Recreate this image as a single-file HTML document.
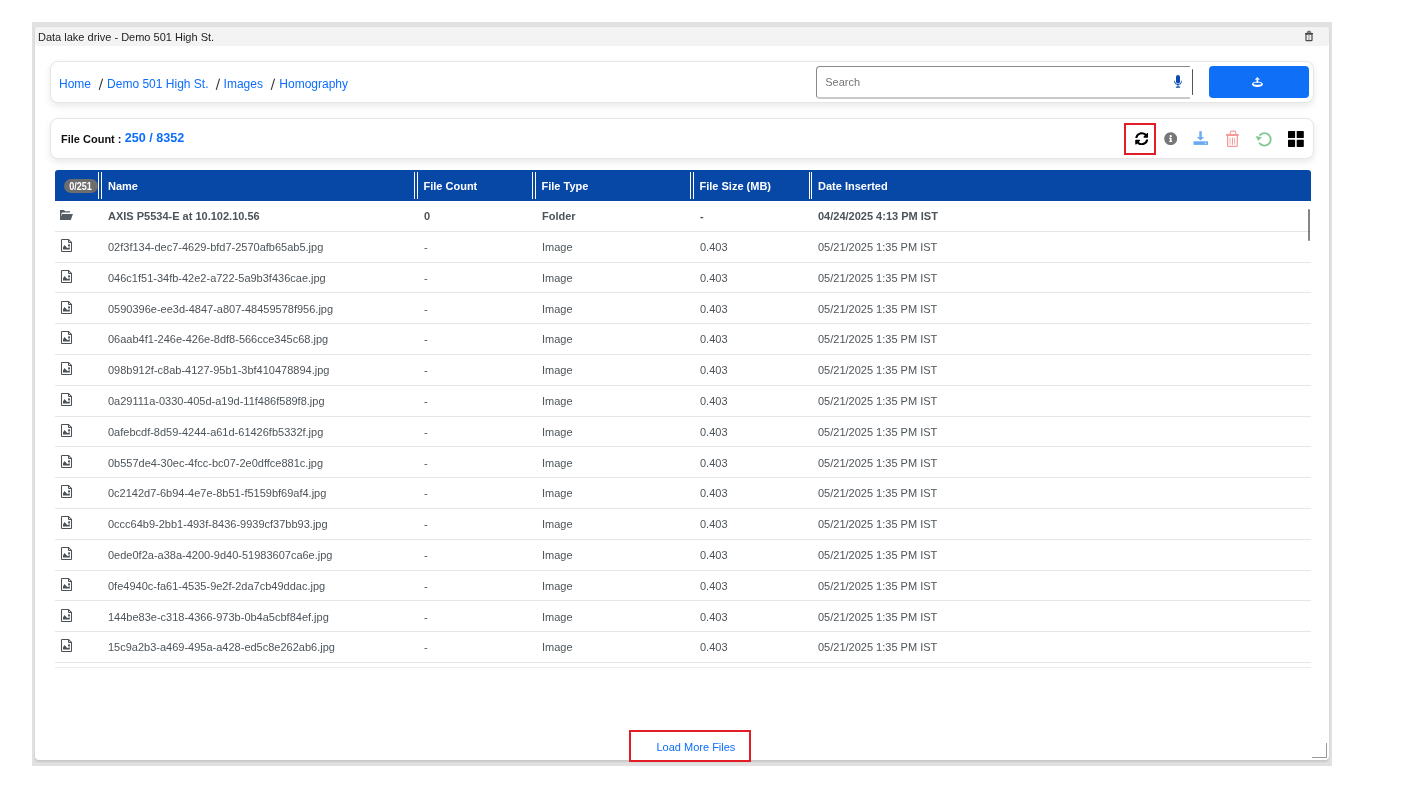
<!DOCTYPE html>
<html><head><meta charset="utf-8">
<style>
*{box-sizing:border-box;margin:0;padding:0}
html,body{width:1402px;height:808px;overflow:hidden;background:#fff;font-family:"Liberation Sans",sans-serif;}
.abs{position:absolute}
.frame{position:absolute;left:32px;top:22px;width:1300px;height:744px;background:#e1e1e1}
.panel{position:absolute;left:35px;top:27px;width:1294px;height:733px;background:#fff;border-radius:4px;box-shadow:0 0 1px rgba(0,0,0,.1),0 2px 2px rgba(0,0,0,.11)}
.titlebar{position:absolute;left:35px;top:27px;width:1294px;height:19px;background:#f3f3f3;border-radius:4px}
.t{position:absolute;white-space:nowrap;line-height:1}
.card{position:absolute;background:#fff;border:1px solid #e6e6e6;border-radius:8px;box-shadow:0 3px 7px rgba(0,0,0,.09)}
.bc{font-size:12px;color:#0d6efd}
.sep{color:#222}
.th{position:absolute;left:55px;top:170px;width:1256px;height:31px;background:#0747a6;border-radius:3px 3px 0 0}
.dl{position:absolute;top:2px;width:4px;height:27px;border-left:1px solid #fff;border-right:1px solid #fff}
.htx{position:absolute;top:10.7px;font-size:11px;font-weight:bold;color:#fff;line-height:1;white-space:nowrap}
.rows{position:absolute;left:55px;top:201px;width:1256px}
.row{position:relative;height:30.8px;border-bottom:1px solid #e6e6e6;font-size:11px;color:#4d5459;line-height:29.8px;white-space:nowrap}
.row span{position:absolute;top:1.2px}
.row .c1{left:53px}.row .c2{left:369px}.row .c3{left:487px}.row .c4{left:645px}.row .c5{left:763px}
.row .ic{position:absolute;left:5px;top:7px}
.b{font-weight:bold}
</style></head>
<body>
<div id="wrap" style="position:absolute;left:0;top:0;width:1402px;height:808px;will-change:transform">
<svg width="0" height="0" style="position:absolute"><defs><symbol id="fold" viewBox="0 0 13 11"><path d="M0 0H4L5.2 1.3H10V2.6H3Q1.5 2.6 1.3 4L1.3 8.5L0 10Z" fill="#555c62"/><path d="M2.3 3.9H12.9L10.8 10H0L1.8 4.6Q2 3.9 2.3 3.9Z" fill="#555c62"/></symbol><symbol id="fimg" viewBox="0 0 13 15"><path d="M1.5 2.1Q1.5 1.5 2.1 1.5H8.5L11.5 4.5V12.9Q11.5 13.5 10.9 13.5H2.1Q1.5 13.5 1.5 12.9Z" fill="none" stroke="#4a5055" stroke-width="1.05"/><path d="M8.5 1.6V4.5H11.4" fill="none" stroke="#4a5055" stroke-width="1"/><rect x="8.1" y="6.3" width="1.9" height="2.1" rx=".5" fill="#4a5055"/><path d="M3 11.6V9.4L4.5 6.9L7.2 10.1L9.8 9.3V11.6Z" fill="#4a5055"/></symbol></defs></svg>
<div class="frame"></div>
<div class="panel"></div>
<div class="titlebar"></div>
<div class="t" style="left:38px;top:32.4px;font-size:11px;color:#222">Data lake drive - Demo 501 High St.</div>
<!-- title trash icon -->
<svg class="abs" style="left:1304px;top:30px" width="10" height="12" viewBox="0 0 10 12">
<path d="M3.3 3.2V2.3a1.2 1.2 0 0 1 1.2-1.1h1a1.2 1.2 0 0 1 1.2 1.1v.9" fill="#888" stroke="#555" stroke-width=".9"/>
<rect x="1" y="3" width="8" height="1.2" fill="#4a4a4a"/>
<path d="M2 4.2h6v5.8a.7.7 0 0 1-.7.7H2.7a.7.7 0 0 1-.7-.7z" fill="none" stroke="#4a4a4a" stroke-width="1.2"/>
<rect x="4.5" y="4.6" width="1" height="5.4" fill="#8a8a8a"/>
</svg>

<!-- breadcrumb card -->
<div class="card" style="left:50px;top:61px;width:1264px;height:42px"></div>
<div class="t bc" style="left:59.0px;top:77.6px">Home</div>
<svg class="abs" style="left:98.4px;top:78px" width="6" height="13" viewBox="0 0 6 13"><path d="M4.6 0.6L1.2 11.8" stroke="#333" stroke-width="1.1"/></svg>
<div class="t bc" style="left:107.1px;top:77.6px">Demo 501 High St.</div>
<svg class="abs" style="left:214.8px;top:78px" width="6" height="13" viewBox="0 0 6 13"><path d="M4.6 0.6L1.2 11.8" stroke="#333" stroke-width="1.1"/></svg>
<div class="t bc" style="left:223.6px;top:77.6px">Images</div>
<svg class="abs" style="left:270.4px;top:78px" width="6" height="13" viewBox="0 0 6 13"><path d="M4.6 0.6L1.2 11.8" stroke="#333" stroke-width="1.1"/></svg>
<div class="t bc" style="left:279.3px;top:77.6px">Homography</div>

<!-- search -->
<div class="abs" style="left:816px;top:66px;width:374px;height:33px;border-top:1px solid #8a8a8a;border-left:1px solid #8a8a8a;border-bottom:2px solid #c9c9c9;border-radius:4px 0 0 4px"></div>
<div class="t" style="left:825.2px;top:76.7px;font-size:11px;color:#757575">Search</div>
<svg class="abs" style="left:1173px;top:74px" width="10" height="15" viewBox="0 0 10 15">
<rect x="3" y="1" width="4" height="8.5" rx="2" fill="#0b49b0"/>
<path d="M1.6 6.8v.9a3.4 2.8 0 0 0 6.8 0v-.9" fill="none" stroke="#0b49b0" stroke-width="1"/>
<rect x="4.5" y="10.8" width="1" height="2" fill="#0b49b0"/><rect x="2.9" y="12.6" width="4.3" height="1.2" rx=".5" fill="#0b49b0"/>
</svg>
<div class="abs" style="left:1192px;top:68.7px;width:1.3px;height:26.7px;background:#555;border-radius:1px"></div>
<div class="abs" style="left:1209px;top:66px;width:100px;height:32px;background:#0f6ff7;border-radius:4px"></div>
<svg class="abs" style="left:1251px;top:76px" width="13" height="12" viewBox="0 0 13 12">
<path d="M3.8 3.7L6.3 1L8.9 3.7Z" fill="#fff"/><rect x="5.55" y="3.4" width="1.55" height="3.4" fill="#fff"/>
<path fill="#fff" fill-rule="evenodd" d="M0.9 8.3a5.5 2.8 0 1 0 11 0a5.5 2.8 0 1 0 -11 0zM2.6 7.7a3.8 1.1 0 1 0 7.6 0a3.8 1.1 0 1 0 -7.6 0z"/>
</svg>

<!-- file count card -->
<div class="card" style="left:50px;top:118px;width:1264px;height:41px"></div>
<div class="t b" style="left:61px;top:133.8px;font-size:11px;color:#111">File Count :</div>
<div class="t b" style="left:124.8px;top:132.3px;font-size:12.6px;color:#0d6efd">250 / 8352</div>

<!-- toolbar icons -->
<div class="abs" style="left:1124px;top:123px;width:32px;height:32px;border:2px solid #e11d26"></div>
<svg class="abs" style="left:1134.5px;top:131.8px" width="13.52" height="13.52" viewBox="0 0 512 512"><path fill="#000" d="M370.72 133.28C339.458 104.008 298.888 87.962 255.848 88c-77.458.068-144.328 53.178-162.791 126.85-1.344 5.363-6.122 9.15-11.651 9.15H24.103c-7.498 0-13.194-6.807-11.807-14.176C33.933 94.924 134.813 8 256 8c66.448 0 126.791 26.136 171.315 68.685L463.03 40.97C478.149 25.851 504 36.559 504 57.941V192c0 13.255-10.745 24-24 24H345.941c-21.382 0-32.090-25.851-16.971-40.971l41.750-41.749zM32 296h134.059c21.382 0 32.090 25.851 16.971 40.971l-41.750 41.750c31.262 29.273 71.835 45.319 114.876 45.280 77.418-.070 144.315-53.144 162.787-126.849 1.344-5.363 6.122-9.150 11.651-9.150h57.304c7.498 0 13.194 6.807 11.807 14.176C478.067 417.076 377.187 504 256 504c-66.448 0-126.791-26.136-171.315-68.685L48.970 471.030C33.851 486.149 8 475.441 8 454.059V320c0-13.255 10.745-24 24-24z"/></svg>
<svg class="abs" style="left:1163.8px;top:131.5px" width="13.42" height="13.42" viewBox="0 0 512 512"><path fill="#777" d="M256 8C119.043 8 8 119.083 8 256c0 136.997 111.043 248 248 248s248-111.003 248-248C504 119.083 392.957 8 256 8zm0 110c23.196 0 42 18.804 42 42s-18.804 42-42 42-42-18.804-42-42 18.804-42 42-42zm56 254c0 6.627-5.373 12-12 12h-88c-6.627 0-12-5.373-12-12v-24c0-6.627 5.373-12 12-12h12v-64h-12c-6.627 0-12-5.373-12-12v-24c0-6.627 5.373-12 12-12h64c6.627 0 12 5.373 12 12v100h12c6.627 0 12 5.373 12 12v24z"/></svg>
<svg class="abs" style="left:1193px;top:131px" width="15" height="14" viewBox="0 0 15 14">
<rect x="6.3" y="0.2" width="2.4" height="6" fill="#6aaaf2"/>
<path d="M3.8 6h7.4l-3.7 3.6z" fill="#6aaaf2"/>
<rect x="0.5" y="10.3" width="14.5" height="3.6" fill="#6aaaf2"/>
<rect x="11.8" y="11.6" width="1.4" height="1" fill="#fff"/>
</svg>
<svg class="abs" style="left:1225px;top:130px" width="15" height="18" viewBox="0 0 15 18">
<path d="M5 4.2L5.7 1.8Q5.9 1.1 6.6 1.1H9.5Q10.2 1.1 10.4 1.8L11.1 4.2" fill="none" stroke="#f59a9a" stroke-width="1.1"/>
<rect x="0.9" y="4" width="13.1" height="2" rx=".9" fill="#f59a9a"/>
<path d="M2.6 6V15.4Q2.6 16.3 3.6 16.3H11.3Q12.3 16.3 12.3 15.4V6" fill="none" stroke="#f59a9a" stroke-width="1.2"/>
<rect x="4.5" y="7.5" width="1" height="7.3" rx=".5" fill="#f8b0b0"/>
<rect x="6.9" y="7.5" width="1.1" height="7.3" rx=".5" fill="#f59a9a"/>
<rect x="9.1" y="7.5" width="1" height="7.3" rx=".5" fill="#f8b0b0"/>
</svg>
<svg class="abs" style="left:1252px;top:128px" width="24" height="22" viewBox="0 0 24 22">
<path d="M7.7 15.3A6.2 6.2 0 1 0 8.1 7" fill="none" stroke="#80c995" stroke-width="1.85" stroke-linecap="round"/>
<path d="M4.1 8.4L9.5 9.4L6.2 12.5Z" fill="#80c995" stroke="#80c995" stroke-width=".6" stroke-linejoin="round"/>
</svg>
<svg class="abs" style="left:1287.6px;top:131.2px" width="16" height="16" viewBox="0 0 16 16">
<rect x="0" y="0" width="7.1" height="7.1" rx=".6" fill="#000"/><rect x="8.7" y="0" width="7.1" height="7.1" rx=".6" fill="#000"/>
<rect x="0" y="8.8" width="7.1" height="7.1" rx=".6" fill="#000"/><rect x="8.7" y="8.8" width="7.1" height="7.1" rx=".6" fill="#000"/>
</svg>

<!-- table header -->
<div class="th">
  <div class="abs" style="left:9px;top:9px;width:34px;height:14px;background:#6d6d6d;border-radius:7px;color:#fff;font-size:10px;font-weight:bold;line-height:15px;text-align:center"><span style="display:inline-block;transform:scaleX(.91)">0/251</span></div>
  <div class="dl" style="left:43px"></div>
  <div class="htx" style="left:53px">Name</div>
  <div class="dl" style="left:359px"></div>
  <div class="htx" style="left:368.5px">File Count</div>
  <div class="dl" style="left:477.3px"></div>
  <div class="htx" style="left:486.5px">File Type</div>
  <div class="dl" style="left:635.4px"></div>
  <div class="htx" style="left:644.5px">File Size (MB)</div>
  <div class="dl" style="left:754px;width:3.4px"></div>
  <div class="htx" style="left:763px">Date Inserted</div>
</div>

<div class="rows" id="rows">
<div class="row"><svg class="ic" style="left:5px;top:8.8px" width="13" height="11"><use href="#fold"/></svg><span class="c1 b">AXIS P5534-E at 10.102.10.56</span><span class="c2 b">0</span><span class="c3 b">Folder</span><span class="c4 b">-</span><span class="c5 b">04/24/2025 4:13 PM IST</span></div>
<div class="row"><svg class="ic" style="left:5px;top:6.2px" width="13" height="15"><use href="#fimg"/></svg><span class="c1">02f3f134-dec7-4629-bfd7-2570afb65ab5.jpg</span><span class="c2">-</span><span class="c3">Image</span><span class="c4">0.403</span><span class="c5">05/21/2025 1:35 PM IST</span></div>
<div class="row"><svg class="ic" style="left:5px;top:6.2px" width="13" height="15"><use href="#fimg"/></svg><span class="c1">046c1f51-34fb-42e2-a722-5a9b3f436cae.jpg</span><span class="c2">-</span><span class="c3">Image</span><span class="c4">0.403</span><span class="c5">05/21/2025 1:35 PM IST</span></div>
<div class="row"><svg class="ic" style="left:5px;top:6.2px" width="13" height="15"><use href="#fimg"/></svg><span class="c1">0590396e-ee3d-4847-a807-48459578f956.jpg</span><span class="c2">-</span><span class="c3">Image</span><span class="c4">0.403</span><span class="c5">05/21/2025 1:35 PM IST</span></div>
<div class="row"><svg class="ic" style="left:5px;top:6.2px" width="13" height="15"><use href="#fimg"/></svg><span class="c1">06aab4f1-246e-426e-8df8-566cce345c68.jpg</span><span class="c2">-</span><span class="c3">Image</span><span class="c4">0.403</span><span class="c5">05/21/2025 1:35 PM IST</span></div>
<div class="row"><svg class="ic" style="left:5px;top:6.2px" width="13" height="15"><use href="#fimg"/></svg><span class="c1">098b912f-c8ab-4127-95b1-3bf410478894.jpg</span><span class="c2">-</span><span class="c3">Image</span><span class="c4">0.403</span><span class="c5">05/21/2025 1:35 PM IST</span></div>
<div class="row"><svg class="ic" style="left:5px;top:6.2px" width="13" height="15"><use href="#fimg"/></svg><span class="c1">0a29111a-0330-405d-a19d-11f486f589f8.jpg</span><span class="c2">-</span><span class="c3">Image</span><span class="c4">0.403</span><span class="c5">05/21/2025 1:35 PM IST</span></div>
<div class="row"><svg class="ic" style="left:5px;top:6.2px" width="13" height="15"><use href="#fimg"/></svg><span class="c1">0afebcdf-8d59-4244-a61d-61426fb5332f.jpg</span><span class="c2">-</span><span class="c3">Image</span><span class="c4">0.403</span><span class="c5">05/21/2025 1:35 PM IST</span></div>
<div class="row"><svg class="ic" style="left:5px;top:6.2px" width="13" height="15"><use href="#fimg"/></svg><span class="c1">0b557de4-30ec-4fcc-bc07-2e0dffce881c.jpg</span><span class="c2">-</span><span class="c3">Image</span><span class="c4">0.403</span><span class="c5">05/21/2025 1:35 PM IST</span></div>
<div class="row"><svg class="ic" style="left:5px;top:6.2px" width="13" height="15"><use href="#fimg"/></svg><span class="c1">0c2142d7-6b94-4e7e-8b51-f5159bf69af4.jpg</span><span class="c2">-</span><span class="c3">Image</span><span class="c4">0.403</span><span class="c5">05/21/2025 1:35 PM IST</span></div>
<div class="row"><svg class="ic" style="left:5px;top:6.2px" width="13" height="15"><use href="#fimg"/></svg><span class="c1">0ccc64b9-2bb1-493f-8436-9939cf37bb93.jpg</span><span class="c2">-</span><span class="c3">Image</span><span class="c4">0.403</span><span class="c5">05/21/2025 1:35 PM IST</span></div>
<div class="row"><svg class="ic" style="left:5px;top:6.2px" width="13" height="15"><use href="#fimg"/></svg><span class="c1">0ede0f2a-a38a-4200-9d40-51983607ca6e.jpg</span><span class="c2">-</span><span class="c3">Image</span><span class="c4">0.403</span><span class="c5">05/21/2025 1:35 PM IST</span></div>
<div class="row"><svg class="ic" style="left:5px;top:6.2px" width="13" height="15"><use href="#fimg"/></svg><span class="c1">0fe4940c-fa61-4535-9e2f-2da7cb49ddac.jpg</span><span class="c2">-</span><span class="c3">Image</span><span class="c4">0.403</span><span class="c5">05/21/2025 1:35 PM IST</span></div>
<div class="row"><svg class="ic" style="left:5px;top:6.2px" width="13" height="15"><use href="#fimg"/></svg><span class="c1">144be83e-c318-4366-973b-0b4a5cbf84ef.jpg</span><span class="c2">-</span><span class="c3">Image</span><span class="c4">0.403</span><span class="c5">05/21/2025 1:35 PM IST</span></div>
<div class="row"><svg class="ic" style="left:5px;top:6.2px" width="13" height="15"><use href="#fimg"/></svg><span class="c1">15c9a2b3-a469-495a-a428-ed5c8e262ab6.jpg</span><span class="c2">-</span><span class="c3">Image</span><span class="c4">0.403</span><span class="c5">05/21/2025 1:35 PM IST</span></div>
</div>
<div class="abs" style="left:55px;top:667px;width:1256px;height:1px;background:#ececec"></div>
<div class="abs" style="left:1308px;top:209px;width:1.7px;height:32px;background:#858585;border-radius:1px"></div>

<!-- load more -->
<div class="abs" style="left:629px;top:729.6px;width:122px;height:32px;border:2px solid #e11d26"></div>
<div class="t" style="left:656.5px;top:742px;font-size:11px;color:#0d6efd">Load More Files</div>

<!-- resize handle -->
<div class="abs" style="left:1312px;top:743px;width:15.2px;height:15.2px;border-right:1.4px solid #9a9a9a;border-bottom:1.4px solid #9a9a9a"></div>

</div>
</body></html>
